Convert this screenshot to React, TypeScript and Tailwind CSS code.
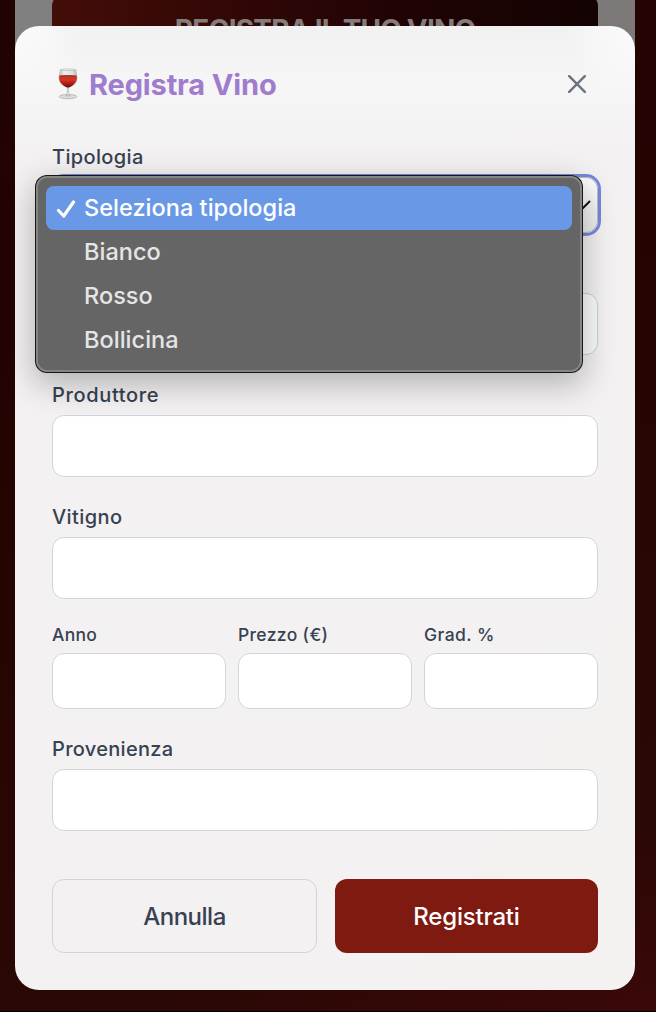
import { useState } from "react";
import type { ReactNode } from "react";

const OPTIONS = ["Seleziona tipologia", "Bianco", "Rosso", "Bollicina"];

function WineGlass() {
  return (
    <svg width="20" height="32" viewBox="0 0 20 32" fill="none" aria-hidden="true">
      <defs>
        <linearGradient id="glass" x1="0" x2="1" y1="0" y2="0">
          <stop offset="0" stopColor="#b5b7b5" />
          <stop offset="0.3" stopColor="#eef0ee" />
          <stop offset="0.75" stopColor="#dfe1df" />
          <stop offset="1" stopColor="#adafad" />
        </linearGradient>
        <linearGradient id="wine" x1="0" x2="0" y1="0" y2="1">
          <stop offset="0" stopColor="#b93a2c" />
          <stop offset="0.35" stopColor="#d93422" />
          <stop offset="0.7" stopColor="#a81c12" />
          <stop offset="1" stopColor="#4c100c" />
        </linearGradient>
      </defs>
      <ellipse cx="10" cy="28.600" rx="8.800" ry="2.100" fill="#dcdddc" stroke="#a6a7a6" strokeWidth="0.7" />
      <path d="M9 19h2l.4 8 2.200 1.200H6.400L8.600 27z" fill="#b3b3b2" />
      <path d="M9.600 20.500h.9v7h-.9z" fill="#f6f6f6" />
      <path d="M2 1.500C1.300 5 .7 7.500.7 10c0 5.200 4.100 9.300 9.300 10.200 5.200-.9 9.300-5 9.300-10.200 0-2.500-.6-5-1.300-8.500z" fill="url(#glass)" />
      <path d="M1.200 8c-.9 5.200 3.200 10.500 8.800 11.700 5.600-1.200 9.700-6.500 8.800-11.700-3.800-1-13.800-1-17.600 0z" fill="url(#wine)" />
      <ellipse cx="10" cy="8.100" rx="8.700" ry="1.100" fill="#a83c31" />
      <ellipse cx="10" cy="1.800" rx="8" ry=".8" fill="#eceeec" stroke="#aaabaa" strokeWidth=".5" />
    </svg>
  );
}

function Field({ label, labelClass, children }: { label?: string; labelClass?: string; children?: ReactNode }) {
  return (
    <label className="block">
      <span className={`relative top-px mb-[9px] block h-6 text-[20px] leading-6 font-[470] whitespace-nowrap ${labelClass ?? ""}`}>{label}</span>
      {children ?? <input className="block h-[62px] w-full rounded-xl border border-[#d1d5db] bg-white px-4 outline-none" />}
    </label>
  );
}

function SmallField({ label, labelClass }: { label: string; labelClass: string }) {
  return (
    <label className="block min-w-0">
      <span className={`relative top-px mb-[7px] block h-6 text-[17.5px] leading-6 font-[470] whitespace-nowrap ${labelClass}`}>{label}</span>
      <input className="block h-14 w-full rounded-xl border border-[#d1d5db] bg-white px-4 outline-none" />
    </label>
  );
}

export default function App() {
  const [selected, setSelected] = useState(0);

  return (
    <div className="relative h-[1012px] w-[656px] overflow-hidden border-b border-black bg-[linear-gradient(160deg,#210302_0%,#250502_45%,#2a0805_85%,#3b0808_100%)] font-['Inter',sans-serif] text-[#374151]">
      <div className="mx-[15px] flex w-[620px] rounded-b-3xl bg-gradient-to-r from-[#808080] to-[#7d7979] px-[37px] pb-4">
        <div className="-mt-1.5 flex h-[72px] w-full items-center justify-center rounded-xl bg-[linear-gradient(90deg,#430d09_0%,#360806_25%,#200305_65%,#130302_100%)]">
          <span className="text-[28px] font-bold tracking-[-0.8px] whitespace-nowrap text-[#837c7b]">REGISTRA IL TUO VINO</span>
        </div>
      </div>

      <section className="absolute top-[26px] left-[15px] h-[964px] w-[620px] rounded-3xl bg-[radial-gradient(circle_at_0_0,#fcfcfc_0,#fcfcfc00_70px),radial-gradient(circle_at_100%_0,#fcfcfc_0,#fcfcfc00_70px),linear-gradient(180deg,#f2f1f1_0%,#f6f6f6_6%,#f3f1f2_13%,#f3f1f200_14%),linear-gradient(120deg,#f3f1f2_76%,#f3f2f0_84%)] p-[37px]">
        <header className="flex h-[42px] items-center justify-between">
          <h1 className="flex items-center pl-[6px] text-[29px] font-bold text-[#a07ccf]">
            <WineGlass />
            <span className="relative top-px ml-[11px] tracking-[-0.150px] whitespace-nowrap">Registra Vino</span>
          </h1>
          <button className="mr-[12px] block" aria-label="Chiudi">
            <svg width="18" height="18" viewBox="0 0 18 18" fill="none" stroke="#6b7280" strokeWidth="2.400" strokeLinecap="round">
              <path d="M1.200 1.200l15.600 15.600M16.800 1.200L1.200 16.800" />
            </svg>
          </button>
        </header>

        <form className="mt-[39px] flex flex-col" onSubmit={(e) => e.preventDefault()}>
          <div className="flex flex-col gap-[27px]">
            <Field label="Tipologia" labelClass="tracking-[0.350px]">
              <div className="flex h-14 items-center justify-end rounded-xl border border-[#b9bdc6] bg-gradient-to-b from-white to-[#ececec] pr-[6px] ring-3 ring-[#7788dc]">
                <svg width="16" height="10" viewBox="0 0 16 10" fill="none" stroke="#111" strokeWidth="2" strokeLinecap="round" strokeLinejoin="round">
                  <path d="M1.500 1.500L8 8l6.500-6.500" />
                </svg>
              </div>
            </Field>
            <Field>
              <input className="block h-[62px] w-full rounded-xl border border-[#cbd0d2] bg-[#fbfcfc] px-4 outline-none" />
            </Field>
            <Field label="Produttore" labelClass="tracking-[0.650px]" />
            <Field label="Vitigno" labelClass="tracking-[0.4px]" />
          </div>
          <div className="mt-[23px] grid grid-cols-3 gap-3">
            <SmallField label="Anno" labelClass="tracking-[0.250px]" />
            <SmallField label="Prezzo (€)" labelClass="tracking-[0.350px]" />
            <SmallField label="Grad. %" labelClass="tracking-[0.450px]" />
          </div>
          <div className="mt-[27px]">
            <Field label="Provenienza" labelClass="tracking-[0.3px]" />
          </div>
          <div className="mt-12 flex h-[74px] gap-[18px] text-[24px] font-[470]">
            <button className="w-[265px] rounded-xl border border-[#d1d5db]" type="button">
              <span className="relative top-px tracking-[-0.5px]">Annulla</span>
            </button>
            <button className="w-[263px] rounded-xl bg-[#7f1a11] text-white" type="submit">
              <span className="relative top-px tracking-[-0.2px]">Registrati</span>
            </button>
          </div>
        </form>
      </section>

      <ul className="absolute top-[176px] left-[36px] h-[196px] w-[546px] rounded-[11px] border-2 border-[#858585] bg-[#666565] px-2 py-2 text-[23.5px] font-[460] text-[#e5e5e5] shadow-[0_0_0_1px_#171717,0_10px_32px_3px_rgba(0,0,0,0.26)]">
        {OPTIONS.map((option, index) => (
          <li
            key={option}
            onClick={() => setSelected(index)}
            className={`flex h-11 items-center rounded-lg ${index === selected ? "bg-[#6999e6] text-white" : ""}`}
          >
            <span className="flex w-[38px] items-center pl-[10px]">
              {index === selected && (
                <svg width="21" height="20" viewBox="0 0 21 20" fill="none" stroke="white" strokeWidth="3.200" strokeLinecap="round" strokeLinejoin="round">
                  <path d="M2.500 12.500l5.200 5.500L17.500 4" />
                </svg>
              )}
            </span>
            <span className="tracking-[0.030px] whitespace-nowrap">{option}</span>
          </li>
        ))}
      </ul>
    </div>
  );
}
